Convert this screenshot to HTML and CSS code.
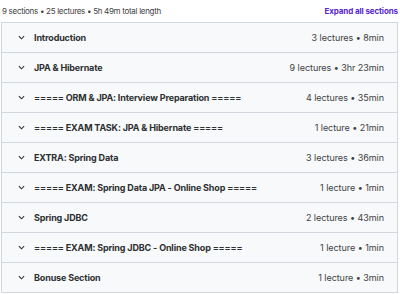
FILE: index.html
```html
<!DOCTYPE html>
<html lang="en">
<head>
    <meta charset="UTF-8">
    <title>Course content</title>
    <link rel="stylesheet" href="styles.css">
</head>
<body>
    <div class="curriculum">
        <div class="summary">
            <span class="totals">9 sections • 25 lectures • 5h 49m total length</span>
            <a class="expand" href="#">Expand all sections</a>
        </div>

        <div class="sections">
            <div class="section">
                <svg class="chevron" viewBox="0 0 8 5"><path d="M1 1l3 3 3-3" /></svg>
                <span class="title">Introduction</span>
                <span class="meta">3 lectures • 8min</span>
            </div>
            <div class="section">
                <svg class="chevron" viewBox="0 0 8 5"><path d="M1 1l3 3 3-3" /></svg>
                <span class="title">JPA &amp; Hibernate</span>
                <span class="meta">9 lectures • 3hr 23min</span>
            </div>
            <div class="section">
                <svg class="chevron" viewBox="0 0 8 5"><path d="M1 1l3 3 3-3" /></svg>
                <span class="title">===== ORM &amp; JPA: Interview Preparation =====</span>
                <span class="meta">4 lectures • 35min</span>
            </div>
            <div class="section">
                <svg class="chevron" viewBox="0 0 8 5"><path d="M1 1l3 3 3-3" /></svg>
                <span class="title">===== EXAM TASK: JPA &amp; Hibernate =====</span>
                <span class="meta">1 lecture • 21min</span>
            </div>
            <div class="section">
                <svg class="chevron" viewBox="0 0 8 5"><path d="M1 1l3 3 3-3" /></svg>
                <span class="title">EXTRA: Spring Data</span>
                <span class="meta">3 lectures • 36min</span>
            </div>
            <div class="section">
                <svg class="chevron" viewBox="0 0 8 5"><path d="M1 1l3 3 3-3" /></svg>
                <span class="title">===== EXAM: Spring Data JPA - Online Shop =====</span>
                <span class="meta">1 lecture • 1min</span>
            </div>
            <div class="section">
                <svg class="chevron" viewBox="0 0 8 5"><path d="M1 1l3 3 3-3" /></svg>
                <span class="title">Spring JDBC</span>
                <span class="meta">2 lectures • 43min</span>
            </div>
            <div class="section">
                <svg class="chevron" viewBox="0 0 8 5"><path d="M1 1l3 3 3-3" /></svg>
                <span class="title">===== EXAM: Spring JDBC - Online Shop =====</span>
                <span class="meta">1 lecture • 1min</span>
            </div>
            <div class="section">
                <svg class="chevron" viewBox="0 0 8 5"><path d="M1 1l3 3 3-3" /></svg>
                <span class="title">Bonuse Section</span>
                <span class="meta">1 lecture • 3min</span>
            </div>
        </div>
    </div>
</body>
</html>
```

FILE: styles.css
```css
body {
    margin: 0;
    font-family: Inter, "Noto Sans", sans-serif;
    color: #2d2f31;
    background-color: #fff;
}

.curriculum {
    width: 397px;
    margin-left: 1px;
}

.summary {
    display: flex;
    justify-content: space-between;
    align-items: center;
    height: 22px;
    margin-left: 1px;
    font-size: 8px;
}

.totals {
    color: #3e4143;
    letter-spacing: -0.3px;
}

.expand {
    color: #5624d0;
    font-weight: 700;
    letter-spacing: -0.1px;
    text-decoration: none;
}

.sections {
    border: 1px solid #d1d7dc;
    border-bottom: 0;
}

.section {
    display: flex;
    align-items: center;
    height: 29px;
    padding: 0 13px 0 16px;
    background-color: #f7f9fa;
    border-bottom: 1px solid #d1d7dc;
    font-size: 9px;
}

.chevron {
    width: 7px;
    height: 5px;
    margin-right: 9px;
    fill: none;
    stroke: #2d2f31;
    stroke-width: 1.2;
}

.title {
    flex: 1;
    font-weight: 700;
    letter-spacing: -0.15px;
}

.meta {
    color: #3e4143;
    letter-spacing: -0.05px;
}
```
